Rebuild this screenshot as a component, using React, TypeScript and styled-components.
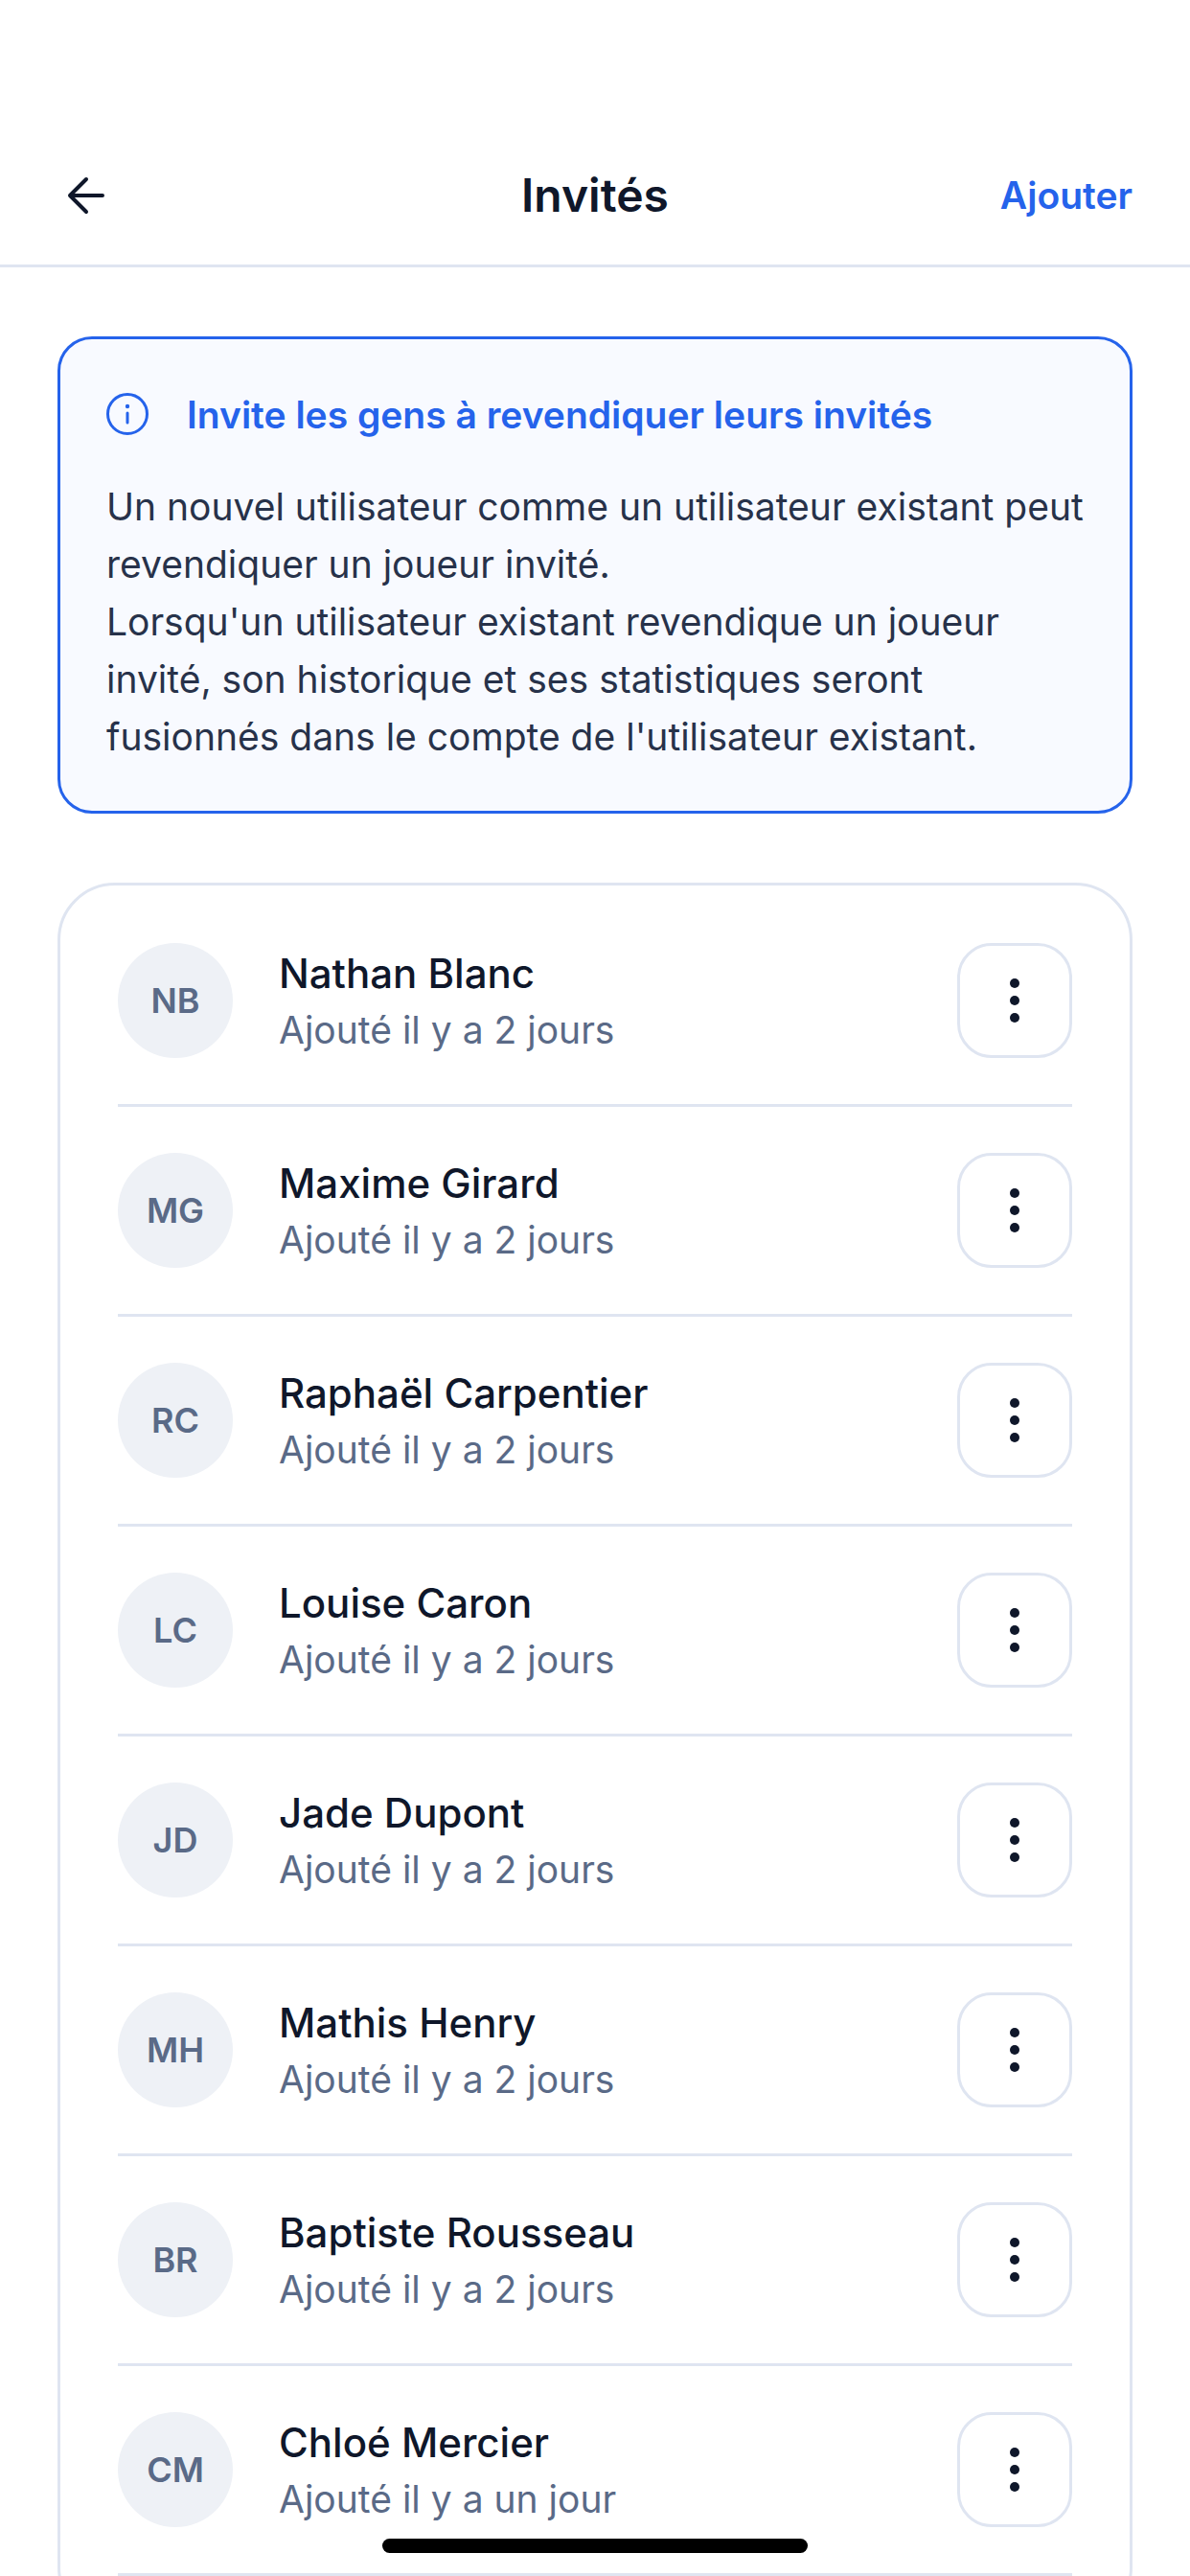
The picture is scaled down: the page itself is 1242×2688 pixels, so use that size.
import React from 'react';
import styled, { createGlobalStyle } from 'styled-components';

const GlobalStyle = createGlobalStyle`
  html, body {
    margin: 0;
    padding: 0;
    background: #fff;
  }
  body {
    font-family: Inter, "Noto Sans", sans-serif;
    color: #0f172a;
  }
`;

const guests: [initials: string, name: string, added: string][] = [
  ['NB', 'Nathan Blanc', 'Ajouté il y a 2 jours'],
  ['MG', 'Maxime Girard', 'Ajouté il y a 2 jours'],
  ['RC', 'Raphaël Carpentier', 'Ajouté il y a 2 jours'],
  ['LC', 'Louise Caron', 'Ajouté il y a 2 jours'],
  ['JD', 'Jade Dupont', 'Ajouté il y a 2 jours'],
  ['MH', 'Mathis Henry', 'Ajouté il y a 2 jours'],
  ['BR', 'Baptiste Rousseau', 'Ajouté il y a 2 jours'],
  ['CM', 'Chloé Mercier', 'Ajouté il y a un jour']
];

const BackIcon = () => (
  <svg width="48" height="48" viewBox="0 0 48 48" fill="none">
    <path
      d="M41 24H7M24 7L7 24l17 17"
      stroke="#0f172a"
      strokeWidth="4"
      strokeLinecap="round"
      strokeLinejoin="round"
    />
  </svg>
);

const InfoIcon = () => (
  <svg width="44" height="44" viewBox="0 0 44 44" fill="none">
    <circle cx="22" cy="22" r="20.5" stroke="#2563eb" strokeWidth="3" />
    <path d="M22 21v10" stroke="#2563eb" strokeWidth="3" strokeLinecap="round" />
    <circle cx="22" cy="14" r="2.2" fill="#2563eb" />
  </svg>
);

const DotsIcon = () => (
  <svg width="10" height="46" viewBox="0 0 10 46" fill="#0f172a">
    <circle cx="5" cy="5" r="5" />
    <circle cx="5" cy="23" r="5" />
    <circle cx="5" cy="41" r="5" />
  </svg>
);

const App = () => (
  <Screen>
    <GlobalStyle />
    <Header>
      <BackButton aria-label="Retour">
        <BackIcon />
      </BackButton>
      <Title>Invités</Title>
      <AddButton>Ajouter</AddButton>
    </Header>
    <Content>
      <InfoBox>
        <InfoHeading>
          <InfoIcon />
          <InfoTitle>Invite les gens à revendiquer leurs invités</InfoTitle>
        </InfoHeading>
        <InfoText>
          Un nouvel utilisateur comme un utilisateur existant peut
          <br />
          revendiquer un joueur invité.
          <br />
          Lorsqu'un utilisateur existant revendique un joueur
          <br />
          invité, son historique et ses statistiques seront
          <br />
          fusionnés dans le compte de l'utilisateur existant.
        </InfoText>
      </InfoBox>
      <GuestCard>
        {guests.map(([initials, name, added]) => (
          <GuestRow key={initials}>
            <Avatar>{initials}</Avatar>
            <GuestText>
              <GuestName>{name}</GuestName>
              <GuestAdded>{added}</GuestAdded>
            </GuestText>
            <MenuButton aria-label="Options">
              <DotsIcon />
            </MenuButton>
          </GuestRow>
        ))}
      </GuestCard>
    </Content>
    <HomeIndicator />
  </Screen>
);

const Screen = styled.div`
  position: relative;
  width: 1242px;
  height: 2688px;
  overflow: hidden;
  background: #fff;
`;

const Header = styled.header`
  display: grid;
  grid-template-columns: 1fr auto 1fr;
  align-items: center;
  box-sizing: border-box;
  height: 279px;
  padding: 132px 60px 0;
  border-bottom: 3px solid #dfe5f1;
`;

const BackButton = styled.button`
  display: flex;
  justify-self: start;
  padding: 0;
  margin-left: 6px;
  border: 0;
  background: none;
`;

const Title = styled.h1`
  margin: 0;
  font-size: 48px;
  font-weight: 600;
  line-height: 72px;
  color: #0f172a;
`;

const AddButton = styled.button`
  justify-self: end;
  padding: 0;
  border: 0;
  background: none;
  font-family: inherit;
  font-size: 39px;
  font-weight: 600;
  line-height: 60px;
  color: #2563eb;
`;

const Content = styled.main`
  display: flex;
  flex-direction: column;
  gap: 72px;
  padding: 72px 60px 0;
`;

const InfoBox = styled.section`
  box-sizing: border-box;
  height: 498px;
  padding: 54px 48px 0;
  border: 3px solid #2563eb;
  border-radius: 36px;
  background: #f8faff;
`;

const InfoHeading = styled.div`
  display: flex;
  align-items: center;
  gap: 40px;
  margin-bottom: 41px;

  svg {
    margin-bottom: 3px;
  }
`;

const InfoTitle = styled.h2`
  margin: 0;
  font-size: 39px;
  font-weight: 600;
  line-height: 50px;
  color: #2563eb;
`;

const InfoText = styled.p`
  margin: 0;
  font-size: 39px;
  font-weight: 400;
  line-height: 60px;
  color: #27324a;
  white-space: nowrap;
`;

const GuestCard = styled.section`
  padding: 60px 60px 0;
  border: 3px solid #dfe5f1;
  border-radius: 60px;
`;

const GuestRow = styled.div`
  display: flex;
  align-items: center;
  gap: 48px;
  padding-bottom: 48px;
  margin-bottom: 48px;
  border-bottom: 3px solid #dfe5f1;
`;

const Avatar = styled.div`
  display: flex;
  flex: none;
  align-items: center;
  justify-content: center;
  width: 120px;
  height: 120px;
  border-radius: 50%;
  background: #eef1f6;
  font-size: 36px;
  font-weight: 600;
  color: #5a6a87;
`;

const GuestText = styled.div`
  flex: 1;
  box-sizing: border-box;
  height: 120px;
  min-width: 0;
  padding-top: 2px;
`;

const GuestName = styled.div`
  font-size: 42px;
  font-weight: 500;
  line-height: 59px;
  color: #0f172a;
`;

const GuestAdded = styled.div`
  font-size: 39px;
  font-weight: 400;
  line-height: 59px;
  color: #5a6a87;
`;

const MenuButton = styled.button`
  display: flex;
  flex: none;
  align-items: center;
  justify-content: center;
  box-sizing: border-box;
  width: 120px;
  height: 120px;
  padding: 0;
  border: 3px solid #dfe5f1;
  border-radius: 36px;
  background: #fff;
`;

const HomeIndicator = styled.div`
  position: absolute;
  left: 399px;
  top: 2649px;
  width: 444px;
  height: 15px;
  border-radius: 8px;
  background: #000;
`;

export default App;
